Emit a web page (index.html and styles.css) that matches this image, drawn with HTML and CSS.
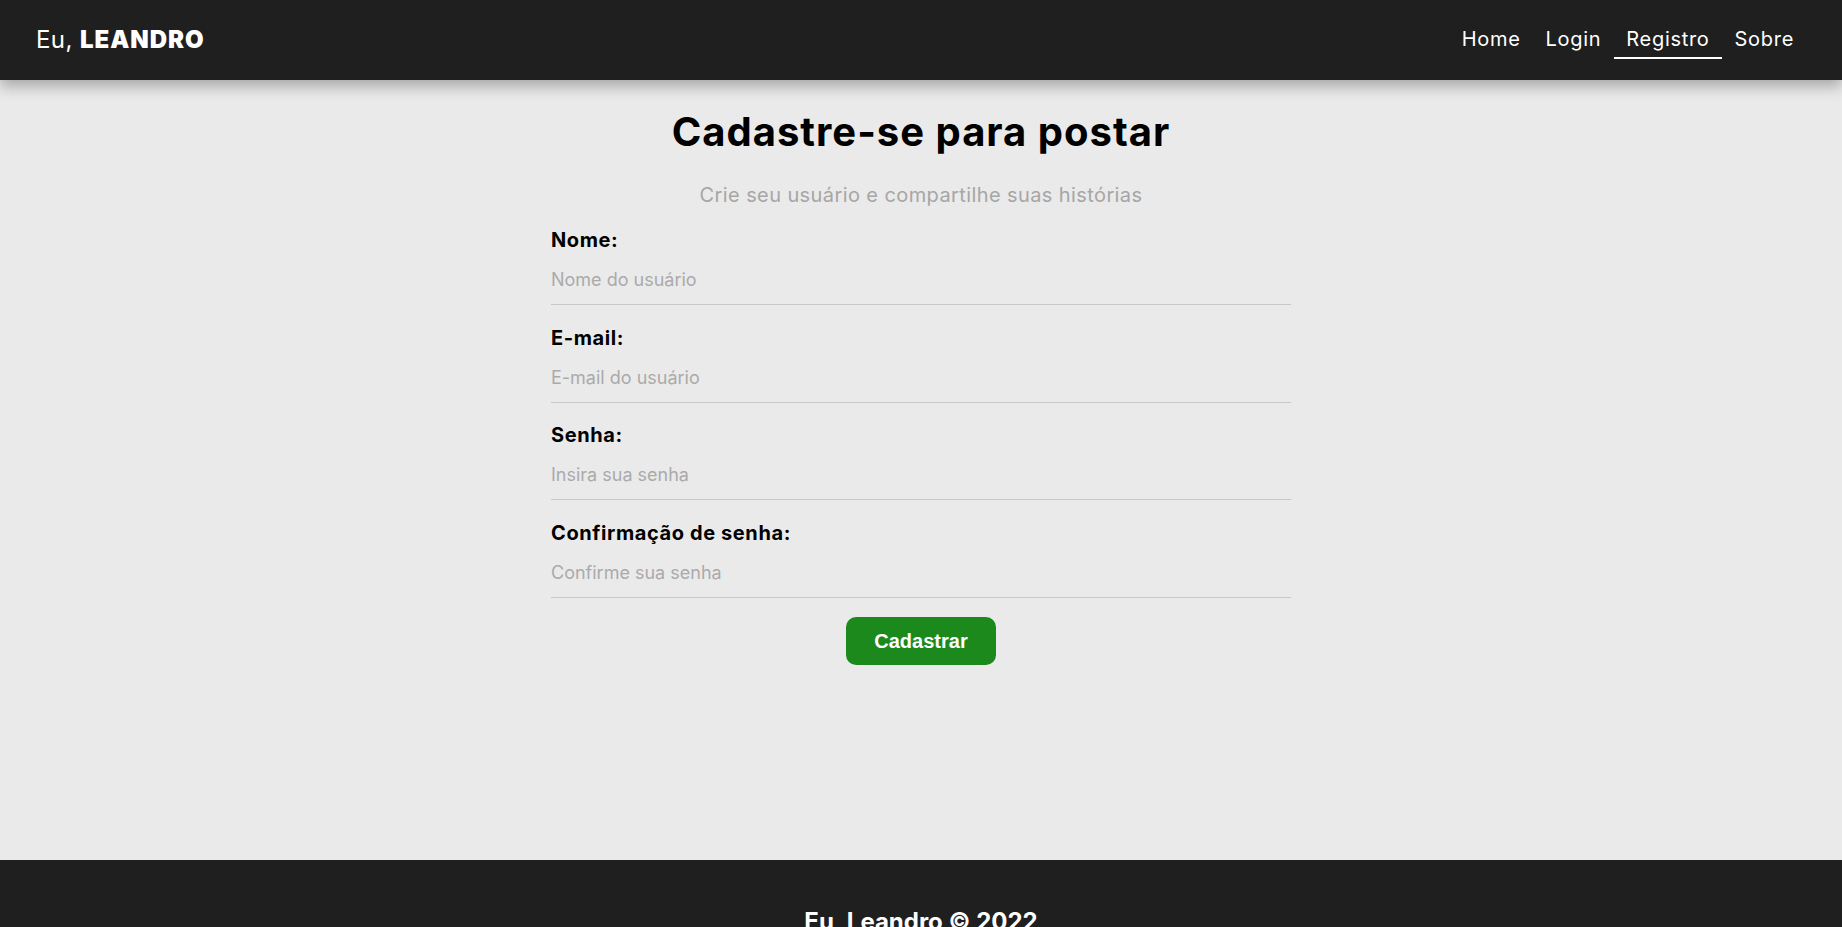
FILE: index.html
```html
<!DOCTYPE html>
<html lang="pt-BR">
<head>
<meta charset="utf-8">
<title>Eu, Leandro - Registro</title>
<link rel="stylesheet" href="styles.css">
</head>
<body>
<header class="navbar">
  <a class="brand" href="#">Eu, <span class="brand-strong">LEANDRO</span></a>
  <nav class="nav-links">
    <a class="nav-link" href="#">Home</a>
    <a class="nav-link" href="#">Login</a>
    <a class="nav-link active" href="#">Registro</a>
    <a class="nav-link" href="#">Sobre</a>
  </nav>
</header>
<main class="register">
  <h1 class="title">Cadastre-se para postar</h1>
  <p class="subtitle">Crie seu usuário e compartilhe suas histórias</p>
  <form class="form">
    <label class="field">
      <span class="field-label">Nome:</span>
      <input class="field-input" type="text" placeholder="Nome do usuário">
    </label>
    <label class="field">
      <span class="field-label">E-mail:</span>
      <input class="field-input" type="email" placeholder="E-mail do usuário">
    </label>
    <label class="field">
      <span class="field-label">Senha:</span>
      <input class="field-input" type="password" placeholder="Insira sua senha">
    </label>
    <label class="field">
      <span class="field-label">Confirmação de senha:</span>
      <input class="field-input" type="password" placeholder="Confirme sua senha">
    </label>
    <div class="actions">
      <button class="btn" type="button">Cadastrar</button>
    </div>
  </form>
</main>
<footer class="footer">
  <p class="footer-text">Eu, Leandro &copy; 2022</p>
</footer>
</body>
</html>
```

FILE: styles.css
```css
* {
  box-sizing: border-box;
}

body {
  margin: 0;
  background: #eaeaea;
  font-family: Inter, "Noto Sans", "DejaVu Sans", sans-serif;
  color: #000;
}

.navbar {
  height: 80px;
  background: #1f1f1f;
  display: flex;
  align-items: center;
  justify-content: space-between;
  padding: 0 36px;
  box-shadow: 0 6px 14px rgba(0, 0, 0, 0.3);
  position: relative;
  z-index: 2;
}

.brand {
  color: #fff;
  text-decoration: none;
  font-size: 24px;
  line-height: 28px;
  font-weight: 400;
  letter-spacing: 0.4px;
}

.brand-strong {
  font-weight: 900;
  letter-spacing: 1px;
}

.nav-links {
  display: flex;
  gap: 1px;
}

.nav-link {
  color: #fff;
  text-decoration: none;
  font-size: 20px;
  line-height: 24px;
  letter-spacing: 0.7px;
  padding: 6px 12px;
  border-bottom: 2px solid transparent;
}

.nav-link.active {
  border-bottom-color: #fff;
}

.register {
  min-height: 780px;
  padding-top: 28px;
  display: flex;
  flex-direction: column;
  align-items: center;
}

.title {
  margin: 0;
  font-size: 40px;
  line-height: 48px;
  font-weight: 700;
  letter-spacing: 1px;
}

.subtitle {
  margin: 27px 0 0;
  font-size: 20px;
  line-height: 24px;
  letter-spacing: 0.4px;
  color: #a6a6a6;
}

.form {
  width: 740px;
  margin-top: 21px;
  display: flex;
  flex-direction: column;
  gap: 20.6px;
}

.field {
  display: flex;
  flex-direction: column;
  gap: 2px;
}

.field-label {
  font-size: 20px;
  line-height: 24px;
  font-weight: 700;
  letter-spacing: 0.6px;
}

.field-input {
  font-family: inherit;
  font-size: 18px;
  line-height: 22px;
  padding: 15px 0 13px;
  border: none;
  border-bottom: 1px solid #c8c8c8;
  background: transparent;
  outline: none;
  color: #333;
}

.field-input::placeholder {
  color: #aaa;
}

.actions {
  display: flex;
  justify-content: center;
  margin-top: -1px;
}

.btn {
  font-family: "Liberation Sans", Arial, sans-serif;
  font-weight: 700;
  font-size: 20px;
  line-height: 24px;
  padding: 12px 28px;
  color: #fff;
  background: #1b891b;
  border: none;
  border-radius: 10px;
  cursor: pointer;
}

.footer {
  background: #1f1f1f;
  padding: 47px 0;
  text-align: center;
}

.footer-text {
  margin: 0;
  color: #fff;
  font-size: 24px;
  line-height: 29px;
  font-weight: 700;
}
```
